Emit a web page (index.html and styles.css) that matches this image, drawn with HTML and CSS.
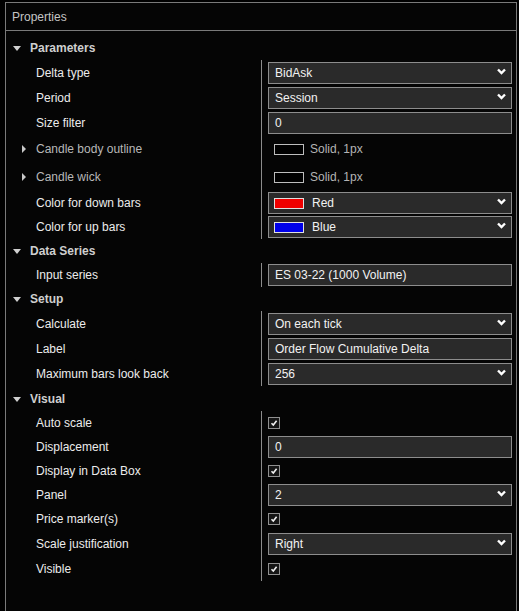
FILE: index.html
```html
<!DOCTYPE html>
<html>
<head>
<meta charset="utf-8">
<link rel="stylesheet" href="styles.css">
</head>
<body>
<div class="panel">
  <div class="title">Properties</div>
  <div class="content">

    <div class="section-head h25"><span class="tri-down"></span>Parameters</div>
    <div class="row h25"><div class="label">Delta type</div><div class="value"><div class="select"><span class="txt">BidAsk</span><svg class="chev" viewBox="0 0 9 7"><polyline points="1,1.5 4.5,5 8,1.5"/></svg></div></div></div>
    <div class="row h25"><div class="label">Period</div><div class="value"><div class="select"><span class="txt">Session</span><svg class="chev" viewBox="0 0 9 7"><polyline points="1,1.5 4.5,5 8,1.5"/></svg></div></div></div>
    <div class="row h25"><div class="label">Size filter</div><div class="value"><div class="input">0</div></div></div>
    <div class="row h28"><div class="label dim"><span class="tri-right"></span>Candle body outline</div><div class="value"><div class="stroke"><span class="line-sw"></span>Solid, 1px</div></div></div>
    <div class="row h28"><div class="label dim"><span class="tri-right"></span>Candle wick</div><div class="value"><div class="stroke"><span class="line-sw"></span>Solid, 1px</div></div></div>
    <div class="row h24"><div class="label">Color for down bars</div><div class="value"><div class="select color"><span class="sw red"></span><span class="txt">Red</span><svg class="chev" viewBox="0 0 9 7"><polyline points="1,1.5 4.5,5 8,1.5"/></svg></div></div></div>
    <div class="row h24"><div class="label">Color for up bars</div><div class="value"><div class="select color"><span class="sw blue"></span><span class="txt">Blue</span><svg class="chev" viewBox="0 0 9 7"><polyline points="1,1.5 4.5,5 8,1.5"/></svg></div></div></div>

    <div class="section-head h24"><span class="tri-down"></span>Data Series</div>
    <div class="row h24"><div class="label">Input series</div><div class="value"><div class="input">ES 03-22 (1000 Volume)</div></div></div>

    <div class="section-head h24"><span class="tri-down"></span>Setup</div>
    <div class="row h25"><div class="label">Calculate</div><div class="value"><div class="select"><span class="txt">On each tick</span><svg class="chev" viewBox="0 0 9 7"><polyline points="1,1.5 4.5,5 8,1.5"/></svg></div></div></div>
    <div class="row h25"><div class="label">Label</div><div class="value"><div class="input">Order Flow Cumulative Delta</div></div></div>
    <div class="row h25"><div class="label">Maximum bars look back</div><div class="value"><div class="select"><span class="txt">256</span><svg class="chev" viewBox="0 0 9 7"><polyline points="1,1.5 4.5,5 8,1.5"/></svg></div></div></div>

    <div class="section-head h25"><span class="tri-down"></span>Visual</div>
    <div class="row h24"><div class="label">Auto scale</div><div class="value"><span class="check"><svg viewBox="0 0 8 8"><polyline points="1.5,4.2 3.3,6 6.6,1.8"/></svg></span></div></div>
    <div class="row h24"><div class="label">Displacement</div><div class="value"><div class="input">0</div></div></div>
    <div class="row h24"><div class="label">Display in Data Box</div><div class="value"><span class="check"><svg viewBox="0 0 8 8"><polyline points="1.5,4.2 3.3,6 6.6,1.8"/></svg></span></div></div>
    <div class="row h24"><div class="label">Panel</div><div class="value"><div class="select"><span class="txt">2</span><svg class="chev" viewBox="0 0 9 7"><polyline points="1,1.5 4.5,5 8,1.5"/></svg></div></div></div>
    <div class="row h24"><div class="label">Price marker(s)</div><div class="value"><span class="check"><svg viewBox="0 0 8 8"><polyline points="1.5,4.2 3.3,6 6.6,1.8"/></svg></span></div></div>
    <div class="row h25"><div class="label">Scale justification</div><div class="value"><div class="select"><span class="txt">Right</span><svg class="chev" viewBox="0 0 9 7"><polyline points="1,1.5 4.5,5 8,1.5"/></svg></div></div></div>
    <div class="row h25"><div class="label">Visible</div><div class="value"><span class="check"><svg viewBox="0 0 8 8"><polyline points="1.5,4.2 3.3,6 6.6,1.8"/></svg></span></div></div>

  </div>
</div>
</body>
</html>
```

FILE: styles.css
```css
html, body {
  margin: 0;
  padding: 0;
  background: #000;
}
body {
  font-family: "Liberation Sans", Arial, sans-serif;
  font-size: 12px;
  color: #e8e8e8;
}
.panel {
  margin: 2px 0 0 5px;
  width: 510px;
  height: 609px;
  box-sizing: border-box;
  border: 1px solid #7a7a7a;
  border-bottom: none;
  background: #050505;
  width: 512px;
}
.title {
  height: 27px;
  line-height: 28px;
  border-bottom: 1px solid #7a7a7a;
  padding-left: 6px;
  color: #c4c4c4;
}
.content {
  padding-top: 4px;
}
.h24 { height: 24px; }
.h25 { height: 25px; }
.h28 { height: 28px; }

.section-head {
  display: flex;
  align-items: center;
  font-weight: bold;
  color: #cfcfcf;
  padding-left: 7px;
}
.tri-down {
  width: 0;
  height: 0;
  border-left: 4px solid transparent;
  border-right: 4px solid transparent;
  border-top: 5px solid #d0d0d0;
  margin-right: 9px;
  margin-top: 1px;
}
.row {
  display: grid;
  grid-template-columns: 255px 1fr;
}
.label {
  display: flex;
  align-items: center;
  padding-left: 30px;
  color: #ececec;
  position: relative;
}
.label.dim {
  color: #b8b8b8;
}
.tri-right {
  position: absolute;
  left: 16px;
  top: 50%;
  margin-top: -4px;
  width: 0;
  height: 0;
  border-top: 4px solid transparent;
  border-bottom: 4px solid transparent;
  border-left: 4px solid #c8c8c8;
}
.value {
  border-left: 1px solid #8c8c8c;
  padding: 0 4px 0 6px;
  display: flex;
  align-items: center;
}
.select, .input {
  box-sizing: border-box;
  width: 100%;
  height: 22px;
  border: 1px solid #8d8d8d;
  background: #2a2a2a;
  display: flex;
  align-items: center;
  padding-left: 6px;
  color: #f2f2f2;
}
.select .txt {
  flex: 1;
}
.chev {
  width: 9px;
  height: 7px;
  margin-right: 5px;
  margin-top: -3px;
  fill: none;
  stroke: #ffffff;
  stroke-width: 2.4;
}
.select.color {
  padding-left: 5px;
}
.sw {
  box-sizing: border-box;
  width: 30px;
  height: 11px;
  border: 1px solid #e0e0e0;
  margin-right: 8px;
}
.sw.red { background: #f00000; }
.sw.blue { background: #0000e8; }
.stroke {
  display: flex;
  align-items: center;
  padding-left: 6px;
  color: #b4b4b4;
}
.line-sw {
  box-sizing: border-box;
  width: 30px;
  height: 11px;
  border: 1px solid #bdbdbd;
  background: #000;
  margin-right: 6px;
}
.check {
  box-sizing: border-box;
  width: 12px;
  height: 12px;
  border: 1px solid #909090;
  background: #151515;
  display: flex;
  align-items: center;
  justify-content: center;
}
.check svg {
  width: 8px;
  height: 8px;
  fill: none;
  stroke: #f0f0f0;
  stroke-width: 1.6;
}
```
